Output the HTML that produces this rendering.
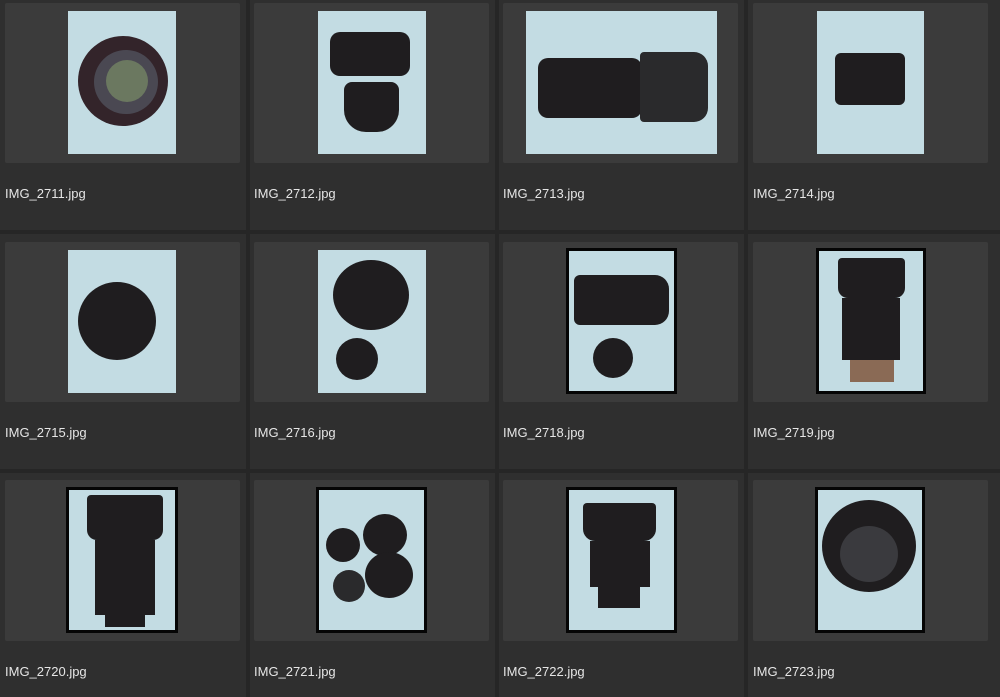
<!DOCTYPE html>
<html><head><meta charset="utf-8"><style>
*{margin:0;padding:0;box-sizing:border-box}
body{width:1000px;height:697px;background:#262626;position:relative;overflow:hidden;font-family:"Liberation Sans",sans-serif}
.cell{position:absolute;background:#2f2f2f}
.pan{position:absolute;background:#3b3b3b;border-radius:2px}
.lbl{position:absolute;color:#e6e6e6;font-size:13px}
.ph{position:absolute;background:#c3dce3}
.bd{outline:3px solid #050505}
.s{position:absolute;background:#1f1d1f}
.c{position:absolute;border-radius:50%;background:#1f1d1f}
</style></head><body>
<!-- cells -->
<div class="cell" style="left:0;top:0;width:246px;height:230px"></div>
<div class="cell" style="left:250px;top:0;width:245px;height:230px"></div>
<div class="cell" style="left:499px;top:0;width:245px;height:230px"></div>
<div class="cell" style="left:748px;top:0;width:252px;height:230px"></div>
<div class="cell" style="left:0;top:234px;width:246px;height:235px"></div>
<div class="cell" style="left:250px;top:234px;width:245px;height:235px"></div>
<div class="cell" style="left:499px;top:234px;width:245px;height:235px"></div>
<div class="cell" style="left:748px;top:234px;width:252px;height:235px"></div>
<div class="cell" style="left:0;top:473px;width:246px;height:224px"></div>
<div class="cell" style="left:250px;top:473px;width:245px;height:224px"></div>
<div class="cell" style="left:499px;top:473px;width:245px;height:224px"></div>
<div class="cell" style="left:748px;top:473px;width:252px;height:224px"></div>
<!-- panels -->
<div class="pan" style="left:5px;top:3px;width:235px;height:160px"></div>
<div class="pan" style="left:254px;top:3px;width:235px;height:160px"></div>
<div class="pan" style="left:503px;top:3px;width:235px;height:160px"></div>
<div class="pan" style="left:753px;top:3px;width:235px;height:160px"></div>
<div class="pan" style="left:5px;top:242px;width:235px;height:160px"></div>
<div class="pan" style="left:254px;top:242px;width:235px;height:160px"></div>
<div class="pan" style="left:503px;top:242px;width:235px;height:160px"></div>
<div class="pan" style="left:753px;top:242px;width:235px;height:160px"></div>
<div class="pan" style="left:5px;top:480px;width:235px;height:161px"></div>
<div class="pan" style="left:254px;top:480px;width:235px;height:161px"></div>
<div class="pan" style="left:503px;top:480px;width:235px;height:161px"></div>
<div class="pan" style="left:753px;top:480px;width:235px;height:161px"></div>
<!-- labels -->
<div class="lbl" style="left:5px;top:186px">IMG_2711.jpg</div>
<div class="lbl" style="left:254px;top:186px">IMG_2712.jpg</div>
<div class="lbl" style="left:503px;top:186px">IMG_2713.jpg</div>
<div class="lbl" style="left:753px;top:186px">IMG_2714.jpg</div>
<div class="lbl" style="left:5px;top:425px">IMG_2715.jpg</div>
<div class="lbl" style="left:254px;top:425px">IMG_2716.jpg</div>
<div class="lbl" style="left:503px;top:425px">IMG_2718.jpg</div>
<div class="lbl" style="left:753px;top:425px">IMG_2719.jpg</div>
<div class="lbl" style="left:5px;top:664px">IMG_2720.jpg</div>
<div class="lbl" style="left:254px;top:664px">IMG_2721.jpg</div>
<div class="lbl" style="left:503px;top:664px">IMG_2722.jpg</div>
<div class="lbl" style="left:753px;top:664px">IMG_2723.jpg</div>
<!-- photos -->
<div class="ph" style="left:68px;top:11px;width:108px;height:143px"></div>
<div class="c" style="left:78px;top:36px;width:90px;height:90px;background:#33242a"></div>
<div class="c" style="left:94px;top:50px;width:64px;height:64px;background:#4a4852"></div>
<div class="c" style="left:106px;top:60px;width:42px;height:42px;background:#6b7860"></div>

<div class="ph" style="left:318px;top:11px;width:108px;height:143px"></div>
<div class="s" style="left:330px;top:32px;width:80px;height:44px;border-radius:10px"></div>
<div class="s" style="left:344px;top:82px;width:55px;height:50px;border-radius:8px 8px 22px 22px"></div>

<div class="ph" style="left:526px;top:11px;width:191px;height:143px"></div>
<div class="s" style="left:538px;top:58px;width:104px;height:60px;border-radius:10px"></div>
<div class="s" style="left:640px;top:52px;width:68px;height:70px;border-radius:4px 14px 14px 4px;background:#2a2a2c"></div>

<div class="ph" style="left:817px;top:11px;width:107px;height:143px"></div>
<div class="s" style="left:835px;top:53px;width:70px;height:52px;border-radius:6px"></div>

<div class="ph" style="left:68px;top:250px;width:108px;height:143px"></div>
<div class="c" style="left:78px;top:282px;width:78px;height:78px"></div>

<div class="ph" style="left:318px;top:250px;width:108px;height:143px"></div>
<div class="c" style="left:333px;top:260px;width:76px;height:70px"></div>
<div class="c" style="left:336px;top:338px;width:42px;height:42px"></div>

<div class="ph bd" style="left:569px;top:251px;width:105px;height:140px"></div>
<div class="s" style="left:574px;top:275px;width:95px;height:50px;border-radius:6px 14px 14px 6px"></div>
<div class="c" style="left:593px;top:338px;width:40px;height:40px"></div>

<div class="ph bd" style="left:819px;top:251px;width:104px;height:140px"></div>
<div class="s" style="left:838px;top:258px;width:67px;height:40px;border-radius:4px 4px 10px 10px"></div>
<div class="s" style="left:842px;top:298px;width:58px;height:62px"></div>
<div class="s" style="left:850px;top:360px;width:44px;height:22px;background:#8a6a55"></div>

<div class="ph bd" style="left:69px;top:490px;width:106px;height:140px"></div>
<div class="s" style="left:87px;top:495px;width:76px;height:45px;border-radius:4px 4px 10px 10px"></div>
<div class="s" style="left:95px;top:540px;width:60px;height:75px"></div>
<div class="s" style="left:105px;top:612px;width:40px;height:15px"></div>

<div class="ph bd" style="left:319px;top:490px;width:105px;height:140px"></div>
<div class="c" style="left:326px;top:528px;width:34px;height:34px"></div>
<div class="c" style="left:363px;top:514px;width:44px;height:42px"></div>
<div class="c" style="left:365px;top:552px;width:48px;height:46px"></div>
<div class="c" style="left:333px;top:570px;width:32px;height:32px;background:#2a2a2c"></div>

<div class="ph bd" style="left:569px;top:490px;width:105px;height:140px"></div>
<div class="s" style="left:583px;top:503px;width:73px;height:38px;border-radius:4px 4px 12px 12px"></div>
<div class="s" style="left:590px;top:541px;width:60px;height:46px"></div>
<div class="s" style="left:598px;top:586px;width:42px;height:22px"></div>

<div class="ph bd" style="left:818px;top:490px;width:104px;height:140px"></div>
<div class="c" style="left:822px;top:500px;width:94px;height:92px"></div>
<div class="c" style="left:840px;top:526px;width:58px;height:56px;background:#3a3a3e"></div>
</body></html>
